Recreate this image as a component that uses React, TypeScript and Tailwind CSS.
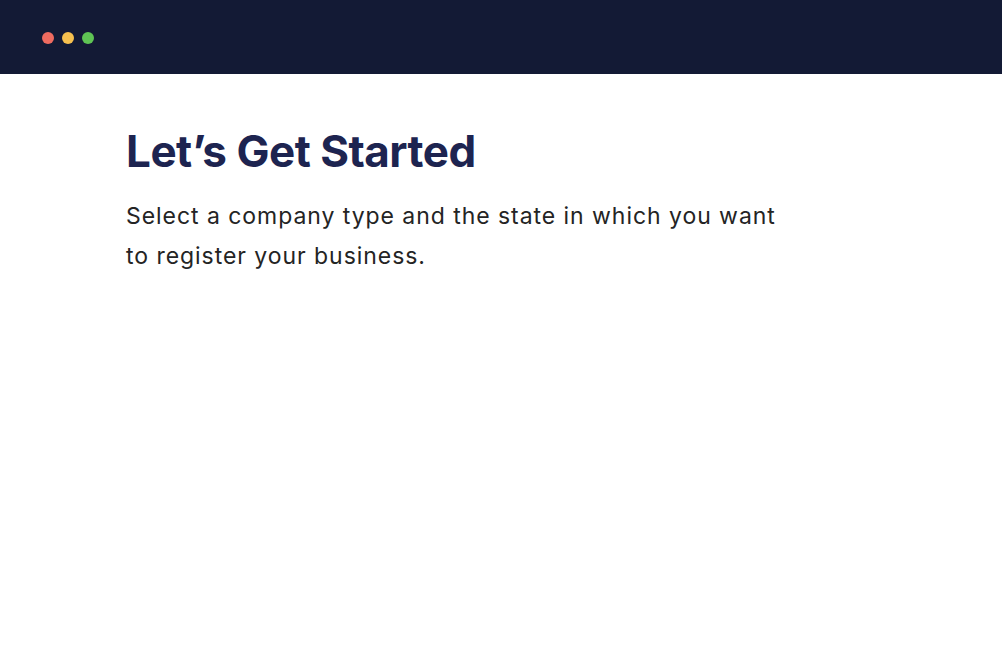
export default function App() {
  return (
    <div className="min-h-screen bg-white" style={{ fontFamily: 'Inter, "Noto Sans", sans-serif' }}>
      {/* Window title bar */}
      <div className="h-[74px] bg-[#131a35] flex items-center gap-2 px-[42px] pt-[2px]">
        <span className="w-3 h-3 rounded-full bg-[#ee6b60]" />
        <span className="w-3 h-3 rounded-full bg-[#f6c04f]" />
        <span className="w-3 h-3 rounded-full bg-[#5fc454]" />
      </div>

      <div className="pl-[126px] pt-[49px]">
        <h1 className="text-[44px] leading-[56px] font-bold text-[#1d2450] tracking-[-0.5px]">Let’s Get Started</h1>
        <p className="mt-[17px] max-w-[665px] text-[23px] leading-[40px] tracking-[0.95px] text-[#242424]">
          Select a company type and the state in which you want to register your business.
        </p>
      </div>
    </div>
  )
}
